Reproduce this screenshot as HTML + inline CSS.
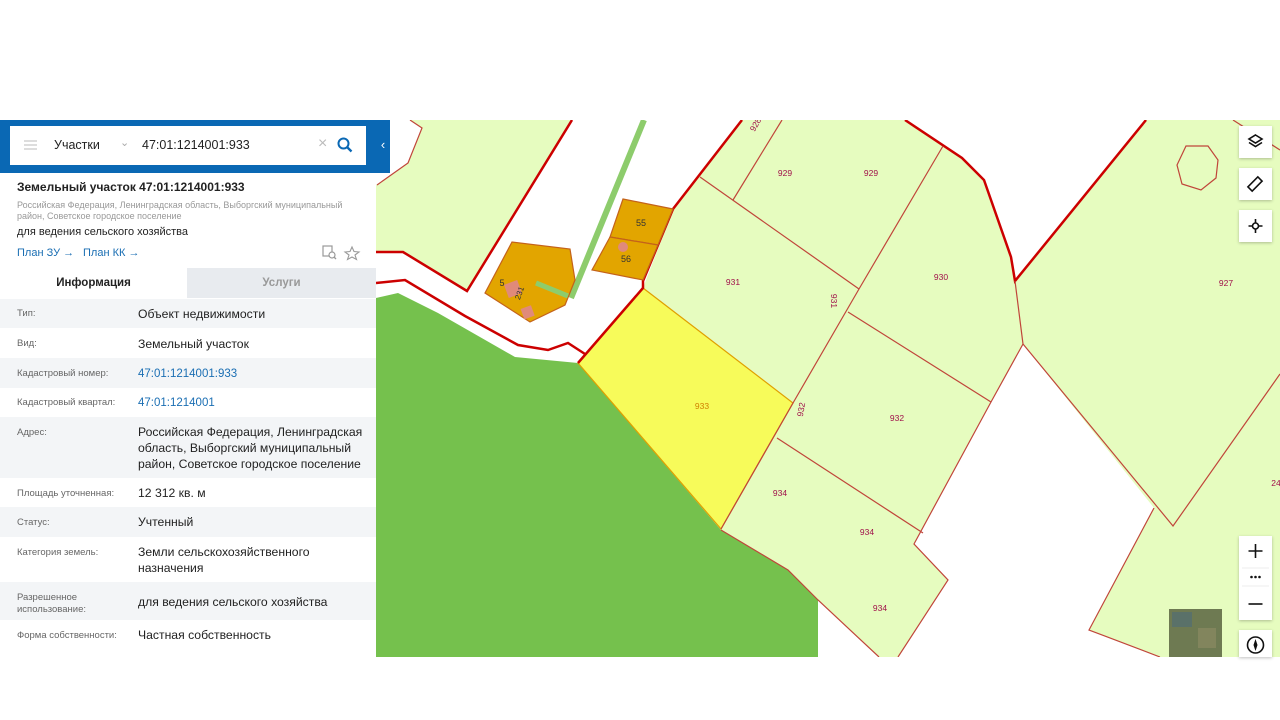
<!DOCTYPE html>
<html><head><meta charset="utf-8"><style>
*{margin:0;padding:0;box-sizing:border-box}
body{width:1280px;height:720px;background:#fff;font-family:"Liberation Sans","DejaVu Sans",sans-serif;position:relative;overflow:hidden}
.abs{position:absolute}
#panel{left:0;top:120px;width:376px;height:537px;background:#fff}
.blue{left:0;top:120px;width:376px;height:53px;background:#0a68b4}
.search{left:10px;top:126px;width:356px;height:39px;background:#fff}
.row{position:absolute;left:0;width:376px;}
.row.s{background:#f3f5f7}
.lab{position:absolute;left:17px;font-size:9.5px;color:#666;line-height:12px}
.val{position:absolute;left:138px;font-size:12.2px;color:#222;line-height:16px}
.link{color:#1a6eb3}
.btn{position:absolute;left:1239px;width:33px;height:32px;background:#fff;box-shadow:0 1px 3px rgba(0,0,0,.25)}
</style></head><body>
<svg class="abs" style="left:376px;top:120px" width="904" height="537" viewBox="376 120 904 537">
<rect x="376" y="120" width="904" height="537" fill="#fff"/>
<polygon points="376,185 408,163 422,128 410,120 572,120 467,291 403,252 376,252" fill="#e6fcbf"/>
<polyline points="410,120 422,128 408,163 377,185" fill="none" stroke="#c0453a" stroke-width="1.2"/>
<polyline points="572,120 467,291 403,252 376,252" fill="none" stroke="#cc0000" stroke-width="2.5"/>
<polygon points="742,120 905,120 962,158 984,180 1011,257 1015,281 1146,120 1280,120 1280,657 1160,657 1089,630 1154,508 1023,344 991,402 914,544 948,580 898,657 879,657 818,600 788,570 721,530 578,363 643,288 673,209" fill="#e6fcbf"/>
<polygon points="1023,344 1154,508 1089,630 1160,657 898,657 948,580 914,544 991,402" fill="#fff"/>
<polygon points="376,298 398,293 438,313 515,357 578,363 721,530 788,570 818,600 818,657 376,657" fill="#75c14d"/>
<polygon points="578,363 643,288 793,403 721,529" fill="#f7fb5a" stroke="#e0a000" stroke-width="1.2"/>
<polyline points="742,120 673,209 643,281 643,288 578,363" fill="none" stroke="#cc0000" stroke-width="2.5"/>
<polyline points="376,283 405,280 465,316 518,345 548,350 568,343 585,354" fill="none" stroke="#cc0000" stroke-width="2.5"/>
<polyline points="905,120 962,158 984,180 1011,257 1015,281 1146,120" fill="none" stroke="#cc0000" stroke-width="2.5"/>
<g fill="none" stroke="#c0453a" stroke-width="1.2">
<polyline points="700,177 859,289"/>
<polyline points="782,120 733,200"/>
<polyline points="943,146 859,289 793,403 721,529"/>
<polyline points="848,312 991,402"/>
<polyline points="1015,281 1023,344 991,402 914,544 948,580 898,657"/>
<polyline points="777,438 923,533"/>
<polyline points="721,530 788,570 818,600 879,657"/>
<polyline points="1023,344 1173,526 1280,374"/>
<polyline points="1154,508 1089,630 1160,657"/>
<polyline points="1233,120 1280,150"/>
<polygon points="1186,146 1208,146 1218,160 1216,178 1201,190 1182,184 1177,165"/>
</g>
<line x1="644" y1="120" x2="571" y2="298" stroke="#8dcc6c" stroke-width="6"/>
<polygon points="485,293 512,242 570,249 575,280 565,305 530,322" fill="#e2a500" stroke="#c4621a" stroke-width="1.2"/>
<line x1="536" y1="283" x2="568" y2="296" stroke="#8dcc6c" stroke-width="5"/>
<rect x="506" y="282" width="14" height="14" fill="#e08a7a" transform="rotate(-20 513 289)"/>
<rect x="522" y="307" width="11" height="11" fill="#e08a7a" transform="rotate(-20 527 312)"/>
<polygon points="623,199 673,209 658,245 610,237" fill="#e2a500" stroke="#c4621a" stroke-width="1.2"/>
<polygon points="610,237 658,245 643,280 592,270" fill="#e2a500" stroke="#c4621a" stroke-width="1.2"/>
<circle cx="623" cy="247" r="5" fill="#e08a7a"/>
<g font-family="Liberation Sans,sans-serif" font-size="8.5" fill="#a0104a" text-anchor="middle">
<text x="785" y="176">929</text><text x="871" y="176">929</text>
<text x="733" y="285">931</text><text x="941" y="280">930</text>
<text x="897" y="421">932</text><text x="1226" y="286">927</text>
<text x="780" y="496">934</text><text x="867" y="535">934</text><text x="880" y="611">934</text>
<text x="831" y="301" transform="rotate(90 831 301)">931</text>
<text x="804" y="410" transform="rotate(-80 804 410)">932</text>
<text x="758" y="126" transform="rotate(-60 758 126)">928</text>
<text x="1276" y="486">24</text>
</g>
<g font-family="Liberation Sans,sans-serif" font-size="9" fill="#333" text-anchor="middle">
<text x="641" y="226">55</text><text x="626" y="262">56</text><text x="502" y="286">5</text>
<text x="522" y="294" font-size="8" transform="rotate(-70 522 294)">231</text>
</g>
<text x="702" y="409" font-size="8.5" fill="#d08000" text-anchor="middle" font-family="Liberation Sans,sans-serif">933</text>
<rect x="1169" y="609" width="53" height="48" fill="#6e7a52"/>
<rect x="1172" y="612" width="20" height="15" fill="#4d6a7a" opacity=".6"/>
<rect x="1198" y="628" width="18" height="20" fill="#8a8a62" opacity=".7"/>
</svg>

<div class="abs" id="panel"></div>
<div class="abs blue"></div>
<div class="abs" style="left:376px;top:120px;width:14px;height:53px;background:#0a68b4;color:#fff;font-size:13px;line-height:50px;text-align:center">‹</div>
<div class="abs search">
 <div class="abs" style="left:14px;top:14px;width:13px;height:2px;background:#ddd;box-shadow:0 4px 0 #ddd,0 8px 0 #ddd"></div>
 <div class="abs" style="left:44px;top:12px;font-size:12.5px;color:#222">Участки</div>
 <div class="abs" style="left:110px;top:10px;font-size:11px;color:#aaa">⌄</div>
 <div class="abs" style="left:132px;top:12px;font-size:12.5px;color:#222">47:01:1214001:933</div>
 <div class="abs" style="left:308px;top:9px;font-size:16px;color:#bbb">×</div>
 <svg class="abs" style="left:327px;top:11px" width="16" height="16"><circle cx="6.5" cy="6.5" r="5" fill="none" stroke="#0a68b4" stroke-width="2"/><line x1="10" y1="10" x2="14.5" y2="14.5" stroke="#0a68b4" stroke-width="2.3"/></svg>
</div>
<div class="abs" style="left:17px;top:180px;font-size:12px;font-weight:bold;color:#222">Земельный участок 47:01:1214001:933</div>
<div class="abs" style="left:17px;top:200px;font-size:9px;line-height:10.5px;color:#999;width:345px">Российская Федерация, Ленинградская область, Выборгский муниципальный район, Советское городское поселение</div>
<div class="abs" style="left:17px;top:226px;font-size:11px;color:#222">для ведения сельского хозяйства</div>
<div class="abs link" style="left:17px;top:247px;font-size:11px">План ЗУ →</div>
<div class="abs link" style="left:83px;top:247px;font-size:11px">План КК →</div>
<svg class="abs" style="left:322px;top:245px" width="40" height="16"><rect x="1" y="1" width="9" height="10" fill="none" stroke="#999" stroke-width="1.2"/><circle cx="10" cy="10" r="3" fill="#fff" stroke="#999" stroke-width="1.2"/><line x1="12" y1="12" x2="14" y2="14" stroke="#999" stroke-width="1.3"/><polygon points="30,2 32,6.5 37,7 33,10 34.5,14.5 30,12 25.5,14.5 27,10 23,7 28,6.5" fill="none" stroke="#999" stroke-width="1.1"/></svg>
<div class="abs" style="left:0;top:268px;width:187px;height:30px;background:#fff;font-size:11.5px;font-weight:bold;color:#222;text-align:center;line-height:31px">Информация</div>
<div class="abs" style="left:187px;top:268px;width:189px;height:30px;background:#e8ebef;font-size:11.5px;font-weight:bold;color:#999;text-align:center;line-height:31px">Услуги</div>

<div class="row s" style="top:299px;height:29px"><span class="lab" style="top:9px">Тип:</span><span class="val" style="top:7px">Объект недвижимости</span></div>
<div class="row" style="top:328px;height:30px"><span class="lab" style="top:10px">Вид:</span><span class="val" style="top:8px">Земельный участок</span></div>
<div class="row s" style="top:358px;height:30px"><span class="lab" style="top:10px">Кадастровый номер:</span><span class="val link" style="top:8px;font-size:11.5px">47:01:1214001:933</span></div>
<div class="row" style="top:388px;height:29px"><span class="lab" style="top:9px">Кадастровый квартал:</span><span class="val link" style="top:7px;font-size:11.5px">47:01:1214001</span></div>
<div class="row s" style="top:417px;height:61px"><span class="lab" style="top:10px">Адрес:</span><span class="val" style="top:7px;width:228px">Российская Федерация, Ленинградская область, Выборгский муниципальный район, Советское городское поселение</span></div>
<div class="row" style="top:478px;height:29px"><span class="lab" style="top:10px">Площадь уточненная:</span><span class="val" style="top:7px">12 312 кв. м</span></div>
<div class="row s" style="top:507px;height:30px"><span class="lab" style="top:10px">Статус:</span><span class="val" style="top:7px">Учтенный</span></div>
<div class="row" style="top:537px;height:45px"><span class="lab" style="top:10px">Категория земель:</span><span class="val" style="top:7px;width:230px">Земли сельскохозяйственного назначения</span></div>
<div class="row s" style="top:582px;height:38px"><span class="lab" style="top:10px">Разрешенное<br>использование:</span><span class="val" style="top:12px">для ведения сельского хозяйства</span></div>
<div class="row" style="top:620px;height:32px"><span class="lab" style="top:10px">Форма собственности:</span><span class="val" style="top:7px">Частная собственность</span></div>

<div class="btn" style="top:126px"><svg width="33" height="32"><polygon points="16.5,9 23,13 16.5,17 10,13" fill="none" stroke="#111" stroke-width="1.6"/><polyline points="10,16.5 16.5,20.5 23,16.5" fill="none" stroke="#111" stroke-width="1.6"/></svg></div>
<div class="btn" style="top:168px"><svg width="33" height="32"><rect x="13" y="9" width="6" height="14" fill="none" stroke="#111" stroke-width="1.6" transform="rotate(45 16 16)"/></svg></div>
<div class="btn" style="top:210px"><svg width="33" height="32"><circle cx="16.5" cy="16" r="3" fill="none" stroke="#111" stroke-width="1.6"/><path d="M16.5 9v4M16.5 19v4M9.5 16h4M19.5 16h4" stroke="#111" stroke-width="1.6"/></svg></div>
<div class="btn" style="top:536px;height:84px"><svg width="33" height="84"><path d="M16.5 8v14M9.5 15h14" stroke="#111" stroke-width="1.6"/><line x1="3" y1="32" x2="30" y2="32" stroke="#eee"/><circle cx="12.5" cy="41" r="1.3" fill="#111"/><circle cx="16.5" cy="41" r="1.3" fill="#111"/><circle cx="20.5" cy="41" r="1.3" fill="#111"/><line x1="3" y1="50" x2="30" y2="50" stroke="#eee"/><path d="M9.5 68h14" stroke="#111" stroke-width="1.6"/></svg></div>
<div class="btn" style="top:630px;height:27px"><svg width="33" height="27"><circle cx="16.5" cy="15" r="8" fill="none" stroke="#111" stroke-width="1.6"/><polygon points="16.5,9 18.5,15 16.5,21 14.5,15" fill="#111"/></svg></div>
</body></html>
